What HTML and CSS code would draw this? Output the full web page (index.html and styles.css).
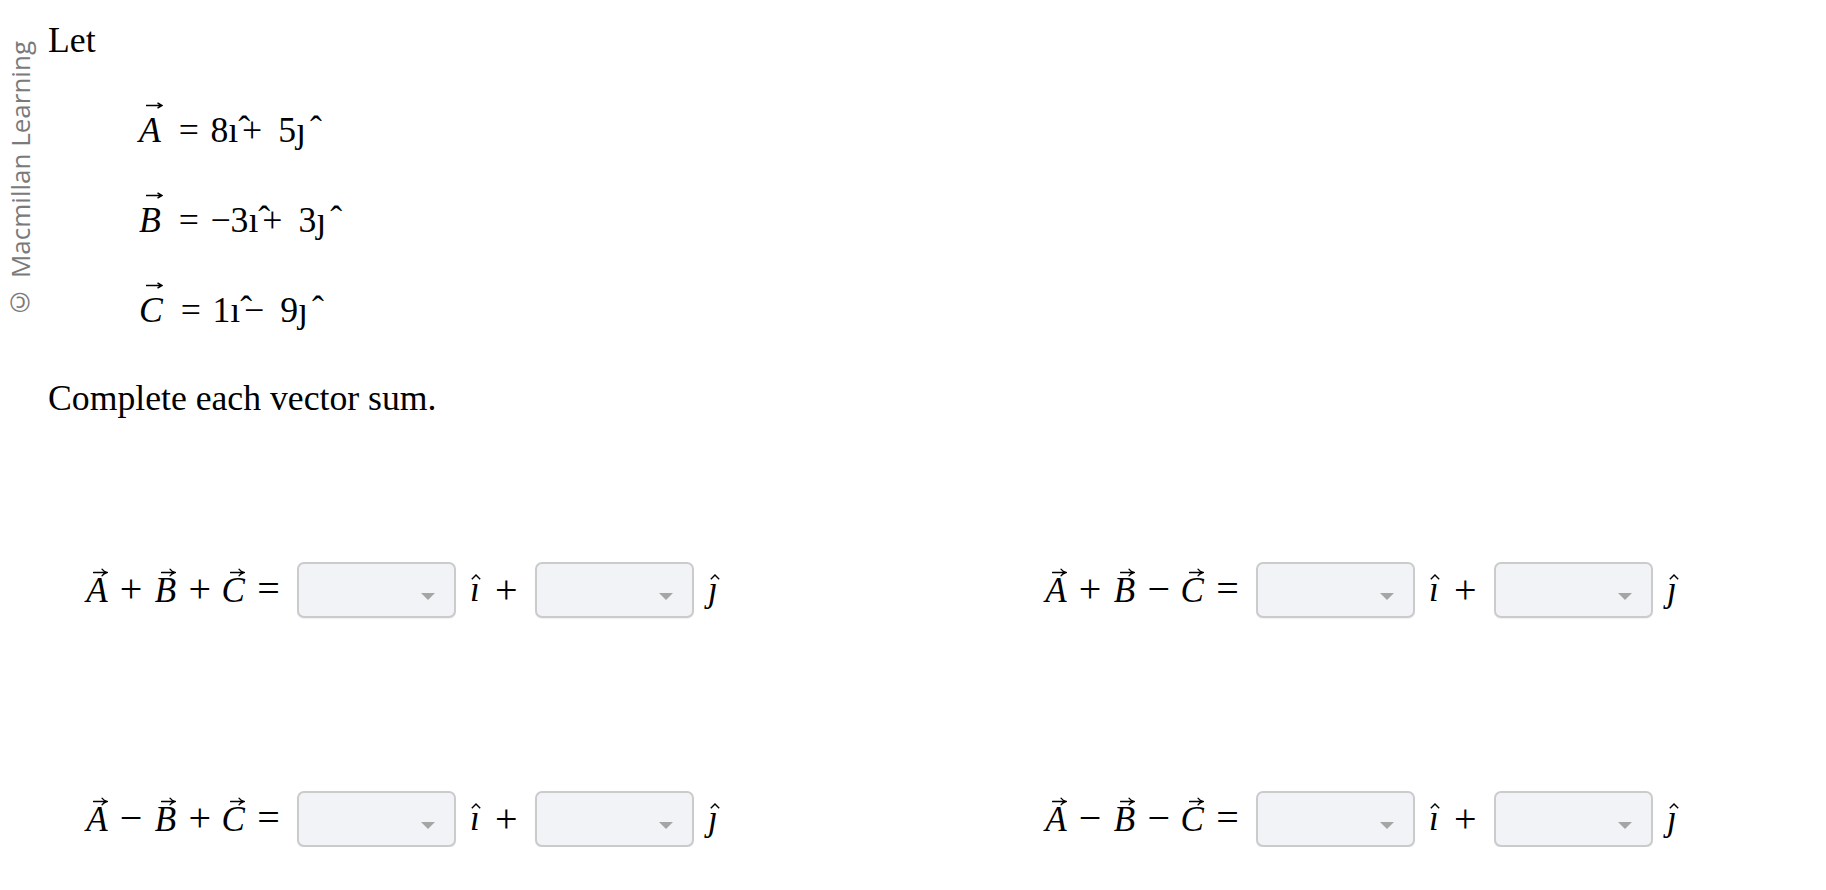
FILE: index.html
```html
<!DOCTYPE html>
<html lang="en">
<head>
<meta charset="utf-8">
<title>Vector sums</title>
<link rel="stylesheet" href="styles.css">
</head>
<body>
<div class="page">
  <div class="watermark">© Macmillan Learning</div>
  <main class="content">
    <p class="let">Let</p>
    <div class="defs">
      <p class="def"><span class="dv">A<svg class="darrow" viewBox="0 0 17 7" width="17" height="7"><path d="M0 3.5H15.5M11.5 0.8L16 3.5L11.5 6.2"/></svg></span><span class="drel">=</span><span>8ı</span><span class="dhat">ˆ</span><span class="dbin">+</span><span>5ȷ</span><span class="dhat2">ˆ</span></p>
      <p class="def"><span class="dv">B<svg class="darrow" viewBox="0 0 17 7" width="17" height="7"><path d="M0 3.5H15.5M11.5 0.8L16 3.5L11.5 6.2"/></svg></span><span class="drel">=</span><span>−3ı</span><span class="dhat">ˆ</span><span class="dbin">+</span><span>3ȷ</span><span class="dhat2">ˆ</span></p>
      <p class="def"><span class="dv">C<svg class="darrow" viewBox="0 0 17 7" width="17" height="7"><path d="M0 3.5H15.5M11.5 0.8L16 3.5L11.5 6.2"/></svg></span><span class="drel">=</span><span>1ı</span><span class="dhat">ˆ</span><span class="dbin">−</span><span>9ȷ</span><span class="dhat2">ˆ</span></p>
    </div>
    <p class="prompt">Complete each vector sum.</p>
    <div class="sums">
      <div class="sum">
        <span class="expr">
          <span class="mv mv-a">A<svg class="varrow" viewBox="0 0 15 9" width="15" height="9"><path d="M0.5 4.5H13.2M9 1.2Q10.8 3.6 14 4.5Q10.8 5.4 9 7.8"/></svg></span>
          <span class="bin">+</span>
          <span class="mv mv-b">B<svg class="varrow" viewBox="0 0 15 9" width="15" height="9"><path d="M0.5 4.5H13.2M9 1.2Q10.8 3.6 14 4.5Q10.8 5.4 9 7.8"/></svg></span>
          <span class="bin">+</span>
          <span class="mv mv-c">C<svg class="varrow" viewBox="0 0 15 9" width="15" height="9"><path d="M0.5 4.5H13.2M9 1.2Q10.8 3.6 14 4.5Q10.8 5.4 9 7.8"/></svg></span>
          <span class="rel">=</span>
        </span>
        <span class="dd"><span class="caret"></span></span>
        <span class="unit">ı<svg class="uhat" viewBox="0 0 10 6" width="10" height="6"><path d="M0.8 5.2L5 1L9.2 5.2"/></svg></span>
        <span class="plus">+</span>
        <span class="dd"><span class="caret"></span></span>
        <span class="unit unit-j">ȷ<svg class="uhat" viewBox="0 0 10 6" width="10" height="6"><path d="M0.8 5.2L5 1L9.2 5.2"/></svg></span>
      </div>
      <div class="sum">
        <span class="expr">
          <span class="mv mv-a">A<svg class="varrow" viewBox="0 0 15 9" width="15" height="9"><path d="M0.5 4.5H13.2M9 1.2Q10.8 3.6 14 4.5Q10.8 5.4 9 7.8"/></svg></span>
          <span class="bin">+</span>
          <span class="mv mv-b">B<svg class="varrow" viewBox="0 0 15 9" width="15" height="9"><path d="M0.5 4.5H13.2M9 1.2Q10.8 3.6 14 4.5Q10.8 5.4 9 7.8"/></svg></span>
          <span class="bin">−</span>
          <span class="mv mv-c">C<svg class="varrow" viewBox="0 0 15 9" width="15" height="9"><path d="M0.5 4.5H13.2M9 1.2Q10.8 3.6 14 4.5Q10.8 5.4 9 7.8"/></svg></span>
          <span class="rel">=</span>
        </span>
        <span class="dd"><span class="caret"></span></span>
        <span class="unit">ı<svg class="uhat" viewBox="0 0 10 6" width="10" height="6"><path d="M0.8 5.2L5 1L9.2 5.2"/></svg></span>
        <span class="plus">+</span>
        <span class="dd"><span class="caret"></span></span>
        <span class="unit unit-j">ȷ<svg class="uhat" viewBox="0 0 10 6" width="10" height="6"><path d="M0.8 5.2L5 1L9.2 5.2"/></svg></span>
      </div>
      <div class="sum">
        <span class="expr">
          <span class="mv mv-a">A<svg class="varrow" viewBox="0 0 15 9" width="15" height="9"><path d="M0.5 4.5H13.2M9 1.2Q10.8 3.6 14 4.5Q10.8 5.4 9 7.8"/></svg></span>
          <span class="bin">−</span>
          <span class="mv mv-b">B<svg class="varrow" viewBox="0 0 15 9" width="15" height="9"><path d="M0.5 4.5H13.2M9 1.2Q10.8 3.6 14 4.5Q10.8 5.4 9 7.8"/></svg></span>
          <span class="bin">+</span>
          <span class="mv mv-c">C<svg class="varrow" viewBox="0 0 15 9" width="15" height="9"><path d="M0.5 4.5H13.2M9 1.2Q10.8 3.6 14 4.5Q10.8 5.4 9 7.8"/></svg></span>
          <span class="rel">=</span>
        </span>
        <span class="dd"><span class="caret"></span></span>
        <span class="unit">ı<svg class="uhat" viewBox="0 0 10 6" width="10" height="6"><path d="M0.8 5.2L5 1L9.2 5.2"/></svg></span>
        <span class="plus">+</span>
        <span class="dd"><span class="caret"></span></span>
        <span class="unit unit-j">ȷ<svg class="uhat" viewBox="0 0 10 6" width="10" height="6"><path d="M0.8 5.2L5 1L9.2 5.2"/></svg></span>
      </div>
      <div class="sum">
        <span class="expr">
          <span class="mv mv-a">A<svg class="varrow" viewBox="0 0 15 9" width="15" height="9"><path d="M0.5 4.5H13.2M9 1.2Q10.8 3.6 14 4.5Q10.8 5.4 9 7.8"/></svg></span>
          <span class="bin">−</span>
          <span class="mv mv-b">B<svg class="varrow" viewBox="0 0 15 9" width="15" height="9"><path d="M0.5 4.5H13.2M9 1.2Q10.8 3.6 14 4.5Q10.8 5.4 9 7.8"/></svg></span>
          <span class="bin">−</span>
          <span class="mv mv-c">C<svg class="varrow" viewBox="0 0 15 9" width="15" height="9"><path d="M0.5 4.5H13.2M9 1.2Q10.8 3.6 14 4.5Q10.8 5.4 9 7.8"/></svg></span>
          <span class="rel">=</span>
        </span>
        <span class="dd"><span class="caret"></span></span>
        <span class="unit">ı<svg class="uhat" viewBox="0 0 10 6" width="10" height="6"><path d="M0.8 5.2L5 1L9.2 5.2"/></svg></span>
        <span class="plus">+</span>
        <span class="dd"><span class="caret"></span></span>
        <span class="unit unit-j">ȷ<svg class="uhat" viewBox="0 0 10 6" width="10" height="6"><path d="M0.8 5.2L5 1L9.2 5.2"/></svg></span>
      </div>
    </div>
  </main>
</div>
</body>
</html>
```

FILE: styles.css
```css
html, body {
  margin: 0;
  padding: 0;
  background: #ffffff;
}

body {
  font-family: "Liberation Serif", "Times New Roman", serif;
  font-size: 35.7px;
  color: #000000;
}

.page {
  display: flex;
  align-items: flex-start;
  padding-left: 3px;
}

.watermark {
  writing-mode: vertical-rl;
  transform: rotate(180deg);
  font-family: "Open Sans", "Liberation Sans", sans-serif;
  font-size: 26px;
  line-height: 35px;
  color: #7a7a7a;
  white-space: nowrap;
  margin-top: 41px;
  flex: none;
}

.content {
  margin-left: 10px;
  padding-top: 20px;
  flex: 1;
}

.let {
  margin: 0;
  line-height: 40px;
}

.defs {
  padding-left: 91px;
}

.def {
  margin: 50px 0 0 0;
  line-height: 40px;
  display: flex;
  align-items: baseline;
  white-space: pre;
}

.dv {
  position: relative;
  font-style: italic;
}

.darrow {
  position: absolute;
  top: -8px;
  left: 7px;
  fill: none;
  stroke: #000;
  stroke-width: 1.5;
}

.drel {
  margin: 0 11.5px 0 18px;
}

.dhat {
  position: relative;
  top: -1px;
}

.dbin {
  margin: 0 16px 0 -8px;
}

.dhat2 {
  margin-left: 4px;
  position: relative;
  top: -1px;
}

.prompt {
  margin: 48px 0 0 0;
  line-height: 40px;
}

.sums {
  display: grid;
  grid-template-columns: 959px auto;
  row-gap: 173px;
  margin-top: 144px;
  padding-left: 36px;
  font-size: 35px;
}

.sum {
  display: flex;
  align-items: center;
  height: 56px;
}

.expr {
  display: flex;
  align-items: baseline;
  line-height: 40px;
}

.mv {
  position: relative;
  font-style: italic;
  text-align: center;
}

.mv-a { width: 26px; }
.mv-b { width: 26.3px; }
.mv-c { width: 24.7px; }

.varrow {
  position: absolute;
  top: -3px;
  left: 9px;
  fill: none;
  stroke: #000;
  stroke-width: 1.3;
  stroke-linecap: round;
}

.bin {
  width: 26.9px;
  margin: 0 7.7px;
  text-align: center;
  font-size: 40px;
}

.rel {
  width: 26.9px;
  margin: 0 9.6px;
  text-align: center;
  font-size: 40px;
}

.dd {
  box-sizing: border-box;
  width: 159px;
  height: 56px;
  margin-left: 5.3px;
  border: 2px solid #cbcbcb;
  border-radius: 7px;
  background: #f2f3f7;
  box-shadow: 0 1px 1px rgba(0, 0, 0, 0.06);
  display: flex;
  justify-content: flex-end;
  align-items: flex-end;
  padding: 0 19px 16px 0;
}

.dd + .unit {
  margin-left: 13px;
}

.caret {
  width: 0;
  height: 0;
  border-left: 7px solid transparent;
  border-right: 7px solid transparent;
  border-top: 7px solid #a5a5a5;
}

.unit {
  position: relative;
  font-style: italic;
  line-height: 40px;
  width: 12px;
  text-align: center;
}

.uhat {
  position: absolute;
  top: 4px;
  left: 2px;
  fill: none;
  stroke: #000;
  stroke-width: 1.4;
  stroke-linejoin: miter;
}

.unit-j .uhat {
  left: 3px;
}

.plus {
  font-size: 40px;
  line-height: 40px;
  width: 27px;
  text-align: center;
  margin-left: 12px;
}

.plus + .dd {
  margin-left: 15px;
}
```
